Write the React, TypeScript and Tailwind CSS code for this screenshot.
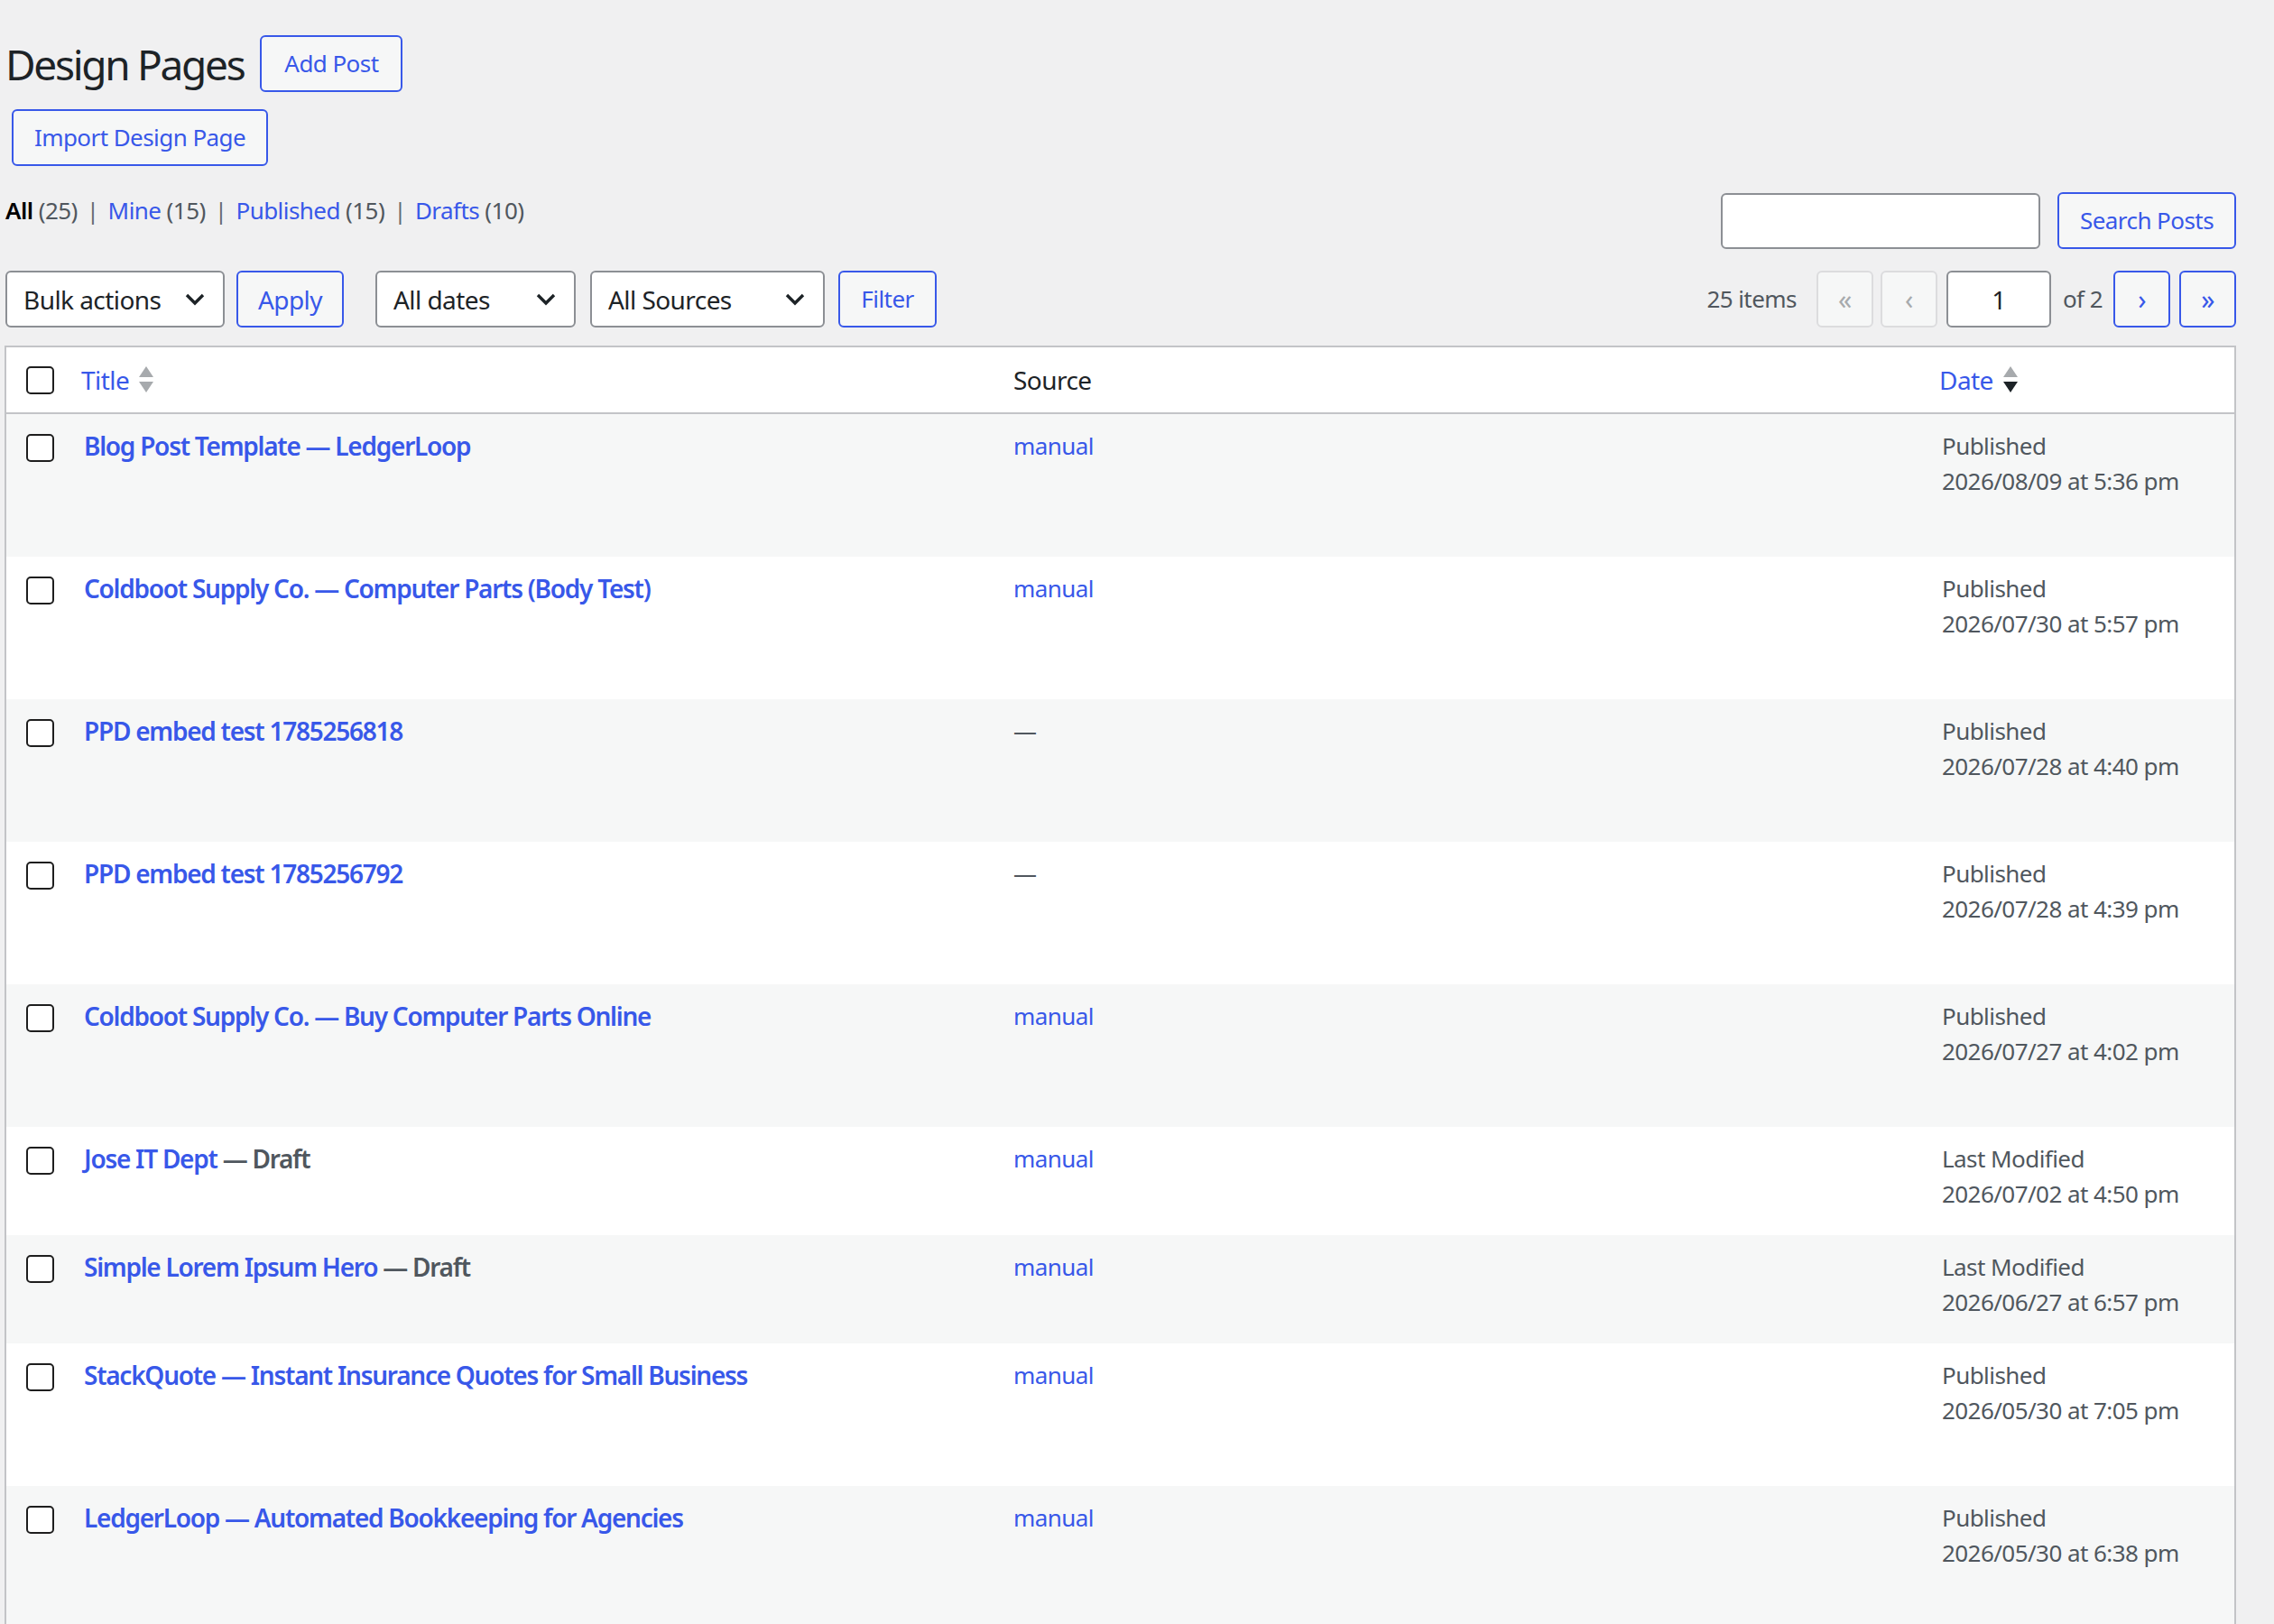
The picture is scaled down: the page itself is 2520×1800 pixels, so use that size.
import React from 'react';

type Row = {
  title: string;
  draft?: boolean;
  source: string;
  status: string;
  date: string;
  tall: boolean;
};

const rows: Row[] = [
  { title: 'Blog Post Template — LedgerLoop', source: 'manual', status: 'Published', date: '2026/08/09 at 5:36 pm', tall: true },
  { title: 'Coldboot Supply Co. — Computer Parts (Body Test)', source: 'manual', status: 'Published', date: '2026/07/30 at 5:57 pm', tall: true },
  { title: 'PPD embed test 1785256818', source: '—', status: 'Published', date: '2026/07/28 at 4:40 pm', tall: true },
  { title: 'PPD embed test 1785256792', source: '—', status: 'Published', date: '2026/07/28 at 4:39 pm', tall: true },
  { title: 'Coldboot Supply Co. — Buy Computer Parts Online', source: 'manual', status: 'Published', date: '2026/07/27 at 4:02 pm', tall: true },
  { title: 'Jose IT Dept', draft: true, source: 'manual', status: 'Last Modified', date: '2026/07/02 at 4:50 pm', tall: false },
  { title: 'Simple Lorem Ipsum Hero', draft: true, source: 'manual', status: 'Last Modified', date: '2026/06/27 at 6:57 pm', tall: false },
  { title: 'StackQuote — Instant Insurance Quotes for Small Business', source: 'manual', status: 'Published', date: '2026/05/30 at 7:05 pm', tall: true },
  { title: 'LedgerLoop — Automated Bookkeeping for Agencies', source: 'manual', status: 'Published', date: '2026/05/30 at 6:38 pm', tall: true },
];

function Checkbox() {
  return <span className="block h-[31px] w-[31px] rounded-[5px] border-2 border-[#1e1e1e] bg-white" />;
}

function Chevron() {
  return (
    <svg width="22" height="14" viewBox="0 0 22 14" className="shrink-0">
      <path d="M2 2 L11 11 L20 2" fill="none" stroke="#1d2327" strokeWidth="3.4" />
    </svg>
  );
}

function SortArrows({ active }: { active?: boolean }) {
  return (
    <svg width="18" height="32" viewBox="0 0 18 32" className="ml-[10px] shrink-0">
      <path d="M9 1 L17 13 L1 13 Z" fill="#a7aaad" />
      <path d="M1 18 L17 18 L9 30 Z" fill={active ? '#1d2327' : '#a7aaad'} />
    </svg>
  );
}

function Select({ label, width }: { label: string; width: string }) {
  return (
    <div className={`${width} flex h-[63px] items-center justify-between rounded-[6px] border-2 border-[#8c8f94] bg-white pl-[18px] pr-[20px] text-[28px] text-[#1d2327]`}>
      <span>{label}</span>
      <Chevron />
    </div>
  );
}

function Button({ children, className = '' }: { children: React.ReactNode; className?: string }) {
  return (
    <button className={`flex h-[63px] items-center justify-center rounded-[6px] border-2 border-[#3858e9] bg-[#f6f7f7] text-[26px] text-[#3858e9] ${className}`}>
      {children}
    </button>
  );
}

function PageButton({ glyph, disabled }: { glyph: string; disabled?: boolean }) {
  return (
    <span
      className={`flex h-[63px] w-[63px] items-center justify-center rounded-[6px] border-2 text-[30px] leading-none ${
        disabled ? 'border-[#dcdcde] bg-[#f6f7f7] text-[#a7aaad]' : 'border-[#3858e9] bg-[#f6f7f7] text-[#3858e9]'
      }`}
    >
      {glyph}
    </span>
  );
}

export default function App() {
  return (
    <div className="min-h-screen bg-[#f0f0f1] pb-10 pl-[6px] pr-[42px] pt-[39px] font-['Noto_Sans',sans-serif] tracking-[-0.035em] text-[#1d2327]">
      {/* Heading */}
      <div className="flex items-center gap-[18px]">
        <h1 className="text-[46px] font-normal leading-[60px] tracking-[-0.05em] text-[#1d2327]">Design Pages</h1>
        <Button className="w-[158px]">Add Post</Button>
      </div>
      <Button className="ml-[7px] mt-[19px] w-[284px]">Import Design Page</Button>

      {/* Views + search */}
      <div className="mt-[29px] flex items-start justify-between">
        <ul className="flex items-center text-[26px] leading-[40px] text-[#50575e]">
          <li>
            <span className="font-semibold text-black">All</span> (25)
            <span className="mx-[10px] text-[#646970]">|</span>
          </li>
          <li>
            <span className="text-[#3858e9]">Mine</span> (15)
            <span className="mx-[10px] text-[#646970]">|</span>
          </li>
          <li>
            <span className="text-[#3858e9]">Published</span> (15)
            <span className="mx-[10px] text-[#646970]">|</span>
          </li>
          <li>
            <span className="text-[#3858e9]">Drafts</span> (10)
          </li>
        </ul>
        <div className="flex items-center gap-[19px]">
          <div className="h-[62px] w-[354px] rounded-[6px] border-2 border-[#8c8f94] bg-white" />
          <Button className="h-[62px] w-[198px]">Search Posts</Button>
        </div>
      </div>

      {/* Tablenav */}
      <div className="mt-[24px] flex items-center justify-between">
        <div className="flex items-center">
          <Select label="Bulk actions" width="w-[243px]" />
          <Button className="ml-[13px] w-[119px] text-[28px]">Apply</Button>
          <Select label="All dates" width="ml-[35px] w-[222px]" />
          <Select label="All Sources" width="ml-[16px] w-[260px]" />
          <Button className="ml-[15px] w-[109px]">Filter</Button>
        </div>
        <div className="flex items-center text-[26px] text-[#50575e]">
          <span className="mr-[22px]">25 items</span>
          <PageButton glyph="«" disabled />
          <span className="ml-[8px]"><PageButton glyph="‹" disabled /></span>
          <span className="ml-[10px] flex h-[63px] w-[116px] items-center justify-center rounded-[6px] border-2 border-[#8c8f94] bg-white text-[28px] text-[#1d2327]">
            1
          </span>
          <span className="ml-[13px] mr-[12px]">of 2</span>
          <PageButton glyph="›" />
          <span className="ml-[10px]"><PageButton glyph="»" /></span>
        </div>
      </div>

      {/* Table */}
      <div className="ml-[-1px] mt-[20px] border-2 border-[#c3c4c7] bg-white">
        <div className="grid h-[74px] grid-cols-[66px_1030px_1029px_1fr] items-center border-b-2 border-[#c3c4c7] text-[28px]">
          <div className="pl-[22px]">
            <Checkbox />
          </div>
          <div className="flex items-center pl-[17px] text-[#3858e9]">
            Title
            <SortArrows />
          </div>
          <div className="pl-[20px] text-[#1d2327]">Source</div>
          <div className="flex items-center pl-[17px] text-[#3858e9]">
            Date
            <SortArrows active />
          </div>
        </div>
        {rows.map((r, i) => (
          <div
            key={i}
            className={`grid grid-cols-[66px_1030px_1029px_1fr] items-start pt-[16px] ${
              r.tall ? 'h-[158px]' : 'h-[120px]'
            } ${i % 2 === 0 ? 'bg-[#f6f7f7]' : 'bg-white'}`}
          >
            <div className="pl-[22px] pt-[6px]">
              <Checkbox />
            </div>
            <div className="pl-[20px] text-[28px] font-semibold leading-[39px] tracking-[-0.045em]">
              <span className="text-[#3858e9]">{r.title}</span>
              {r.draft && <span className="text-[#50575e]"> — Draft</span>}
            </div>
            <div className={`pl-[20px] text-[26px] leading-[39px] ${r.source === '—' ? 'text-[#50575e]' : 'text-[#3858e9]'}`}>
              {r.source}
            </div>
            <div className="pl-[20px] text-[26px] leading-[39px] text-[#50575e]">
              <div>{r.status}</div>
              <div>{r.date}</div>
            </div>
          </div>
        ))}
      </div>
    </div>
  );
}
